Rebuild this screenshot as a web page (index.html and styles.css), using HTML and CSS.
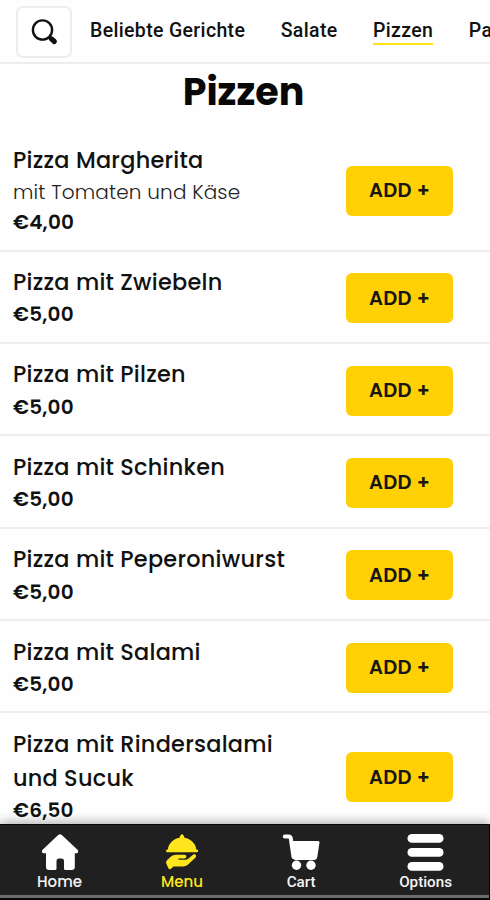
FILE: index.html
```html
<!DOCTYPE html>
<html lang="de">
<head>
<meta charset="utf-8">
<title>Pizzen</title>
<link rel="stylesheet" href="styles.css">
</head>
<body>
<div class="app">
  <header class="topbar">
    <button class="search" aria-label="Suche">
      <svg width="28" height="28" viewBox="0 0 28 28"><circle cx="12.500" cy="12" r="9.600" fill="none" stroke="#111" stroke-width="2.400"/><path d="M19 18.500l2 2" stroke="#111" stroke-width="3"/><path d="M21.500 20.900l2.800 2.600" stroke="#111" stroke-width="5.200" stroke-linecap="round"/></svg>
    </button>
    <nav class="tabs">
      <a class="tab">Beliebte Gerichte</a>
      <a class="tab">Salate</a>
      <a class="tab active">Pizzen</a>
      <a class="tab">Pasta</a>
    </nav>
  </header>
  <main class="menu">
    <h1>Pizzen</h1>
    <section class="item first"><div class="info"><h2>Pizza Margherita</h2><p>mit Tomaten und Käse</p><strong>€4,00</strong></div><button class="add">ADD +</button></section>
    <section class="item"><div class="info"><h2>Pizza mit Zwiebeln</h2><strong>€5,00</strong></div><button class="add">ADD +</button></section>
    <section class="item"><div class="info"><h2>Pizza mit Pilzen</h2><strong>€5,00</strong></div><button class="add">ADD +</button></section>
    <section class="item"><div class="info"><h2>Pizza mit Schinken</h2><strong>€5,00</strong></div><button class="add">ADD +</button></section>
    <section class="item"><div class="info"><h2>Pizza mit Peperoniwurst</h2><strong>€5,00</strong></div><button class="add">ADD +</button></section>
    <section class="item"><div class="info"><h2>Pizza mit Salami</h2><strong>€5,00</strong></div><button class="add">ADD +</button></section>
    <section class="item last"><div class="info"><h2>Pizza mit Rindersalami<br>und Sucuk</h2><strong>€6,50</strong></div><button class="add">ADD +</button></section>
  </main>
  <footer class="bottom">
    <a class="link home"><svg width="38" height="38" viewBox="0 0 38 38"><path d="M17.200 1q1.800-1.600 3.600 0L36.500 15.700q1.600 2-.4 3.500H33.800V33q0 3-3 3H24.500q-1.500 0-1.500-1.500V27q0-2.500-2.500-2.500h-2.500q-2.500 0-2.500 2.500v7.500q0 1.500-1.500 1.500H8q-3 0-3-3V19.200H2q-2-1.500-.4-3.500z"/></svg><span>Home</span></a>
    <a class="link dish"><svg width="38" height="38" viewBox="0 0 38 38"><path d="M16.500 3.800C17 1.500 18 .2 19 .2s2 1.300 2.500 3.600C28 5 33 10 33.300 15.700H4.900C5.200 10 10 5 16.500 3.800zM4.300 15.500h29.600q1.200 0 1.200 1.400t-1.200 1.400H4.300q-1.200 0-1.200-1.400t1.200-1.400zM4 26.300l4-3.700q2-1.800 4.500-1.800h9c2.500 0 2.500 3.600 0 3.600H15.500v1.300h7q1.500 0 3-1.200l4.500-3.700c1.700-1.300 4.300.5 2.600 2.600l-7.800 7.300Q22.800 32.400 20 32.400H10.500L8 34.800Q6.500 36 5.500 34.500L3.200 29.200Q2.800 27.500 4 26.300z"/></svg><span>Menu</span></a>
    <a class="link cart"><svg width="38" height="38" viewBox="0 0 38 38"><path d="M2.800 2.500h3.700q2 0 2.300 2L11.500 23" fill="none" stroke="#fff" stroke-width="4" stroke-linecap="round"/><path d="M8.500 7h27.500q1.700 0 1.500 1.500L35.300 23q-.5 3-3.300 3H13.600q-2.300 0-2.800-2.500z"/><circle cx="14.500" cy="31.300" r="4.700"/><circle cx="29" cy="31.300" r="4.700"/></svg><span>Cart</span></a>
    <a class="link options"><svg width="38" height="38" viewBox="0 0 38 38"><rect x=".5" y="0" width="36" height="8.800" rx="4.400"/><rect x=".5" y="14" width="36" height="8.800" rx="4.400"/><rect x=".5" y="28" width="36" height="8.800" rx="4.400"/></svg><span>Options</span></a>
  </footer>
</div>
</body>
</html>
```
FILE: styles.css
```css
* { box-sizing: border-box; }
body { margin: 0; background: #fefefe; color: #111; }
.app {
  width: 490px; height: 900px; overflow: hidden;
  display: flex; flex-direction: column;
  font-family: Poppins, Inter, sans-serif;
}
.topbar { height: 64px; flex: none; display: flex; align-items: flex-start; padding: 6px 0 0 16px; border-bottom: 2px solid #ededed; overflow: hidden; }
.search { width: 56px; height: 52px; flex: none; padding: 0; display: grid; place-items: center; background: #fff; border: 2px solid #ededed; border-radius: 7px; }
.tabs { display: flex; padding: 13px 0 0 18px; font: 500 19.500px/24px Roboto, sans-serif; letter-spacing: .34px; white-space: nowrap; }
.tab { flex: none; height: 26px; margin-right: 35.500px; }
.active { border-bottom: 2px solid #fbe116; }
.menu { flex: 1; min-height: 0; overflow: hidden; }
h1 { margin: 0; height: 66px; padding: 2px 3px 0 0; text-align: center; font-size: 38px; line-height: 52px; font-weight: 700; color: #080808; }
.item { height: 92.400px; display: flex; align-items: center; justify-content: space-between; padding: 3px 37px 0 13px; border-bottom: 2px solid #eee; }
.item.first { height: 121.500px; padding-top: 1.500px; }
.item.last { height: 127px; border: 0; padding-top: 1px; }
h2 { margin: 0; font-size: 22.400px; line-height: 33.500px; font-weight: 500; letter-spacing: .26px; white-space: nowrap; }
p { margin: 0; font-size: 20px; line-height: 30px; font-weight: 300; letter-spacing: .15px; color: #222; }
strong { display: block; font-size: 20px; line-height: 31px; font-weight: 600; letter-spacing: .2px; }
.first h2 { line-height: 33px; }
.first strong { line-height: 30px; }
.add { width: 107px; height: 50px; flex: none; padding: 0; border: 0; border-radius: 6px; background: #ffd004; color: #171717; font: inherit; font-size: 19.500px; font-weight: 600; letter-spacing: .3px; }
.bottom { position: relative; height: 76px; flex: none; display: flex; justify-content: space-between; padding: 9px 37px 0 37px; background: #202020; border-top: 1px solid #080808; border-right: 1px solid #000; box-shadow: inset 0 -2px #080808, inset 0 -5px #6c6c6c, 0 -2px 10px rgba(0,0,0,.32); }
.link { display: flex; flex-direction: column; align-items: center; color: #f4f4f4; font: 500 15.200px/20px Roboto, sans-serif; }
.link svg { fill: #fff; }
.link.dish { color: #ffe51e; }
.link.dish svg { fill: #ffe51e; }
.home, .dish { font-family: Poppins, sans-serif; font-size: 15px; }
```
